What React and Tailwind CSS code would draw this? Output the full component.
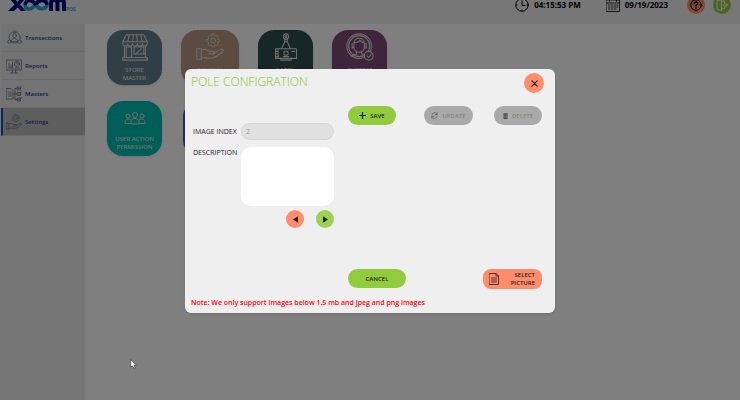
import React from "react";

function Svg({ className, children, box = "0 0 32 32", width = 1.3 }) {
  return (
    <svg viewBox={box} className={className} fill="none" stroke="currentColor" strokeWidth={width} strokeLinecap="round" strokeLinejoin="round" aria-hidden="true">
      {children}
    </svg>
  );
}

const GEAR = "M14.5 3h3l.6 2.6 1.8.8 2.3-1.4 2.1 2.1-1.4 2.3.8 1.8 2.6.6v3l-2.6.6-.8 1.8 1.4 2.3-2.1 2.1-2.3-1.4-1.8.8-.6 2.6h-3l-.6-2.6-1.8-.8-2.3 1.4-2.1-2.1 1.4-2.3-.8-1.8-2.6-.6v-3l2.6-.6.8-1.8L7.700 7.100l2.100-2.100 2.300 1.400 1.800-.8z";

function Logo() {
  return (
    <svg viewBox="0 0 58 16" className="h-4 w-[58px]" fill="none" aria-label="Xoom POS">
      <path d="M1 1h5l3.500 4L13 1h5l-6 6.500L18 14h-5l-3.500-3.500L6 14H0l6.500-6.500z" fill="#000a78" />
      <path d="M17 8c1 6 7 5 11-1s11-5 11 0-7 7-11 1" stroke="#2aa5cf" strokeWidth="3.600" />
      <path d="M28 8C24 2 18 2 17 8" stroke="#000a78" strokeWidth="3.600" />
      <path d="M28 7c3-5 10-5 11 1" stroke="#000a78" strokeWidth="3.600" />
      <path d="M43 14V6q0-3 3.200-3T49.500 6v8M49.500 6q0-3 3.200-3T56 6v8" stroke="#000a78" strokeWidth="4" />
    </svg>
  );
}

function TransactionsIcon() {
  return (
    <Svg className="size-[15px]" width={1.6}>
      <circle cx="16" cy="16" r="12" /><circle cx="16" cy="12" r="4" />
      <path d="M9 24c0-8 14-8 14 0z" />
      <circle cx="5" cy="25" r="3.500" fill="#e6e6e6" /><circle cx="27" cy="25" r="3.500" fill="#e6e6e6" /><circle cx="16" cy="4" r="2.500" fill="#e6e6e6" />
    </Svg>
  );
}

function ReportsIcon() {
  return (
    <Svg className="size-4" width={1.6}>
      <path d="M1 4h30v20H1zM13 24v5m6-5v5M9 30h14M5 20h9M6 19v-8m4 8v-5m3 5V9" />
      <circle cx="22" cy="12" r="5" /><path d="M22 7v5h5M18 20h9" />
    </Svg>
  );
}

function MastersIcon() {
  return (
    <Svg className="size-4" width={1.6}>
      <path d="M1 5h9l4 4v17H1zM4 12h6m-6 4h7m-7 4h7M14 16h8M18 5v22M18 5h4m-4 22h4" />
      <path d="M23 2h6v6h-6zM23 13h6v6h-6zM23 24h6v6h-6zM24 4l2 2 5-5M24 15l2 2 5-5M24 26l2 2 5-5" />
    </Svg>
  );
}

function HandGear({ className, width }) {
  return (
    <Svg className={className} width={width}>
      <g transform="translate(8 -1) scale(.72)"><path d={GEAR} /><circle cx="16" cy="13.500" r="4" /></g>
      <path d="M1 18h5v12H1zM6 20c4-3 7-1 9 1h5c2 0 2 3 0 3h-6M20 23l8-4c3-1 4 1 2 3l-9 6c-4 2-9 0-15 0" />
    </Svg>
  );
}

function StoreIcon() {
  return (
    <Svg className="size-7" width={1.2}>
      <path d="M6 2h20l4 8H2zM2 10v2a2.800 2.800 0 0 0 5.600 0 2.800 2.800 0 0 0 5.600 0 2.800 2.800 0 0 0 5.600 0 2.800 2.800 0 0 0 5.600 0 2.800 2.800 0 0 0 5.600 0v-2M7.600 10l2-8M13.200 10l1-8M18.800 10l-1-8M24.400 10l-2-8M4 15v13m24-13v13M2 28h28v3H2zM6 28V16h6v12M15 16h11v8H15zM14 24h13M18 23l5-5" />
    </Svg>
  );
}

function UsersIcon() {
  return (
    <Svg className="h-[14px] w-[22px]" box="0 0 44 26" width={2}>
      <circle cx="22" cy="7" r="5" /><circle cx="8" cy="9" r="4" /><circle cx="36" cy="9" r="4" />
      <path d="M14 24v-4c0-8 16-8 16 0v4zM14 24H2v-3c0-5 6-8 11-5M30 24h12v-3c0-5-6-8-11-5" />
    </Svg>
  );
}

function LabelIcon() {
  return (
    <Svg className="size-7" width={1.2}>
      <circle cx="16" cy="4" r="3" /><circle cx="16" cy="4" r="1" />
      <path d="M14.500 7v3L11 18m6.500-11v3l3.500 8M14.500 10h3M4 18h24v11H4zM7 18v11M10 29v2h12v-2M5 21h1m-1 3h1m-1 3h1" />
      <circle cx="16" cy="23" r="2.500" /><path d="M13 27h6M23 21h3" />
    </Svg>
  );
}

function SupportIcon() {
  return (
    <Svg className="size-7" width={1.2}>
      <circle cx="15" cy="15" r="14" /><circle cx="15" cy="15" r="12" />
      <path d="M9 12c0-8 12-8 12 0v4c0 8-12 8-12 0zM9 11c4 0 6-1 7-3 1 2 3 3 5 3M7 12v5h2m12-5h2v5h-2M12 21v3l-6 2m12-5v3l4 1" />
      <circle cx="26" cy="26" r="5" fill="#7d4a78" /><path d="M24 26l2 2 3-4" />
    </Svg>
  );
}

const NAV = [
  { label: "Transactions", icon: <TransactionsIcon /> },
  { label: "Reports", icon: <ReportsIcon /> },
  { label: "Masters", icon: <MastersIcon /> },
  { label: "Settings", icon: <HandGear className="size-4" width={1.6} />, active: true },
];

function Tile({ className, icon, lines }) {
  return (
    <button type="button" className={`flex h-[55px] flex-col items-center justify-between rounded-2xl pt-[3px] text-[6px] leading-[8px] font-semibold text-[#dddddd] shadow-sm ${className}`}>
      <span className="flex h-7 items-center">{icon}</span>
      <span className="text-center">{lines[0]}<br />{lines[1]}</span>
    </button>
  );
}

function Pill({ className, children, ...rest }) {
  return (
    <button type="button" className={`flex h-[19px] items-center justify-center gap-1 rounded-full text-[6px] leading-[8px] font-semibold ${className}`} {...rest}>
      {children}
    </button>
  );
}

function Dialog() {
  return (
    <section role="dialog" aria-labelledby="dialog-title" className="w-[370px] rounded-md bg-[#efefef] pt-1 pr-[13px] pb-[5px] pl-[6px] text-[#222222] shadow">
      <header className="flex h-[33px] items-start justify-between">
        <h1 id="dialog-title" className="text-[12px] leading-[17px] font-light text-[#84c425]">POLE CONFIGRATION</h1>
        <button type="button" aria-label="Close" className="-mr-[2px] flex size-5 items-center justify-center rounded-full bg-[#ff8c6b]">
          <Svg className="size-[7px]" box="0 0 8 8" width={1.5}><path d="M1 1l6 6M7 1L1 7" /></Svg>
        </button>
      </header>

      <div className="flex justify-between">
        <form className="flex w-[143px] flex-col gap-[7px] pt-[17px] text-[7px] leading-[10px]">
          <div className="flex items-center justify-between">
            <label htmlFor="image-index" className="pl-[2px]">IMAGE INDEX</label>
            <input id="image-index" disabled defaultValue="2" className="h-[17px] w-[93px] rounded-full border border-[#d6d6d6] bg-[#e0e0e0] px-1 text-[7px] text-[#999999]" />
          </div>
          <div className="flex items-start justify-between">
            <label htmlFor="description" className="pt-[1px] pl-[2px]">DESCRIPTION</label>
            <textarea id="description" className="h-[59px] w-[93px] resize-none rounded-[10px] bg-white p-1" />
          </div>
          <div className="-mt-[3px] flex justify-end gap-3">
            <button type="button" aria-label="Previous" className="flex size-[18px] items-center justify-center rounded-full bg-[#ff8c6b]">
              <svg viewBox="0 0 6 8" className="h-[7px] w-[5px]"><path d="M6 0v8L0 4z" fill="#222222" /></svg>
            </button>
            <button type="button" aria-label="Next" className="flex size-[18px] items-center justify-center rounded-full bg-[#9fd055]">
              <svg viewBox="0 0 6 8" className="h-[7px] w-[5px]"><path d="M0 0v8l6-4z" fill="#222222" /></svg>
            </button>
          </div>
        </form>

        <div className="flex h-[163px] w-[194px] justify-between">
          <Pill className="w-12 bg-[#92cb3e]">
            <Svg className="size-[7px]" box="0 0 8 8" width={1.4}><path d="M4 0v8M0 4h8" /></Svg>
            SAVE
          </Pill>
          <div className="flex gap-[21px]">
            <Pill disabled className="w-[49px] bg-[#a9a9a9] text-[#858585]">
              <Svg className="size-[7px] text-[#666666]" box="0 0 16 16" width={2}><path d="M2 7a6 6 0 0 1 11-3l1 2M14 9a6 6 0 0 1-11 3l-1-2M14 2v4h-4M2 14v-4h4" /></Svg>
              UPDATE
            </Pill>
            <Pill disabled className="w-12 bg-[#a9a9a9] text-[#858585]">
              <svg viewBox="0 0 10 12" className="h-[6px] w-[5px]" fill="#4b4b4b"><path d="M0 1h3V0h4v1h3v1.500H0zM1 3h8v9H1z" /><path d="M3.500 5v5M6.500 5v5" stroke="#a9a9a9" /></svg>
              DELETE
            </Pill>
          </div>
        </div>
      </div>

      <div className="flex justify-end">
        <div className="flex w-[194px] items-start justify-between">
          <Pill className="w-[58px] bg-[#92cb3e]">CANCEL</Pill>
          <button type="button" className="flex h-5 w-[59px] items-center justify-between rounded-lg bg-[#ff8c6b] pr-[7px] pl-[6px] text-right text-[6px] leading-[8px] font-semibold">
            <Svg className="h-3 w-[10px]" box="0 0 20 24" width={1.6}><path d="M1 1h13l5 5v17H1zM14 1v5h5M5 10h10M5 14h10M5 18h10" /></Svg>
            <span>SELECT<br />PICTURE</span>
          </button>
        </div>
      </div>
      <p className="mt-[9px] text-[7px] leading-[10px] font-semibold text-[#ff0010]">Note: We only support images below 1.5 mb and jpeg and png images</p>
    </section>
  );
}

export default function App() {
  return (
    <div className="relative h-screen overflow-hidden bg-white font-['Open_Sans','Noto_Sans',sans-serif]">
      <div className="flex h-full flex-col">
        <header className="-mt-[14px] flex h-[38px] shrink-0 items-center justify-between bg-[#eeeeee] pr-[9px] pl-2 text-[8px] leading-[10px] font-bold text-black">
          <div className="flex items-end">
            <Logo />
            <span className="pb-[1px] text-[5px] leading-[6px] text-[#2aa5cf]">POS</span>
          </div>
          <div className="flex items-center">
            <Svg className="mr-[5px] size-[14px]" box="0 0 28 28" width={2}><circle cx="14" cy="14" r="12.500" /><path d="M14 6v9h6M14 3v1M14 24v1M3 14h1M24 14h1" /></Svg>
            <time className="mr-[25px]">04:15:53 PM</time>
            <Svg className="mr-[5px] size-[14px]" box="0 0 28 28" width={1.6}><path d="M1 4h26v23H1zM1 10h26M7 1v6M21 1v6M5 14h3m3 0h3m3 0h3m2 0h2M5 18h3m3 0h3m3 0h3m2 0h2M5 22h3m3 0h3m3 0h3" /></Svg>
            <time className="mr-[19px]">09/19/2023</time>
            <button type="button" aria-label="Help" className="mr-2 flex size-[18px] items-center justify-center rounded-full bg-[#ff8c6b]">
              <Svg className="size-3" box="0 0 24 24" width={2}><circle cx="12" cy="12" r="10.500" /><path d="M8.500 9.500c0-5 7-5 7-.5 0 3-3.500 2.500-3.500 5M12 17.500v.5" strokeWidth="2.500" /></Svg>
            </button>
            <button type="button" aria-label="Log out" className="flex size-[18px] items-center justify-center rounded-full bg-[#92cb3e] text-white">
              <Svg className="size-3" box="0 0 24 24" width={1.8}><path d="M3 3l8-2v22l-8-2zM11 4h6v5M17 15v5h-6M14 12h9M19 8l4 4-4 4" /></Svg>
            </button>
          </div>
        </header>

        <div className="flex min-h-0 flex-1">
          <nav className="w-[85px] shrink-0 bg-[#ececec]">
            {NAV.map(({ label, icon, active }) => (
              <a key={label} href="#" className={`ml-[1px] flex h-7 items-center gap-[3px] border-b border-b-[#d4d4d4] border-l-2 pl-[3px] text-[6px] leading-[8px] font-semibold text-[#27408b] ${active ? "border-l-[#1450b4] bg-[#bcbcbc]" : "border-l-transparent bg-[#e6e6e6]"}`}>
                <span className="flex w-4 justify-center text-[#66718a]">{icon}</span>
                {label}
              </a>
            ))}
          </nav>
          <main className="grid auto-rows-min grid-cols-[55px_58px_55px_55px] justify-items-center gap-x-[19px] gap-y-4 pt-[6px] pl-[22px]">
            <Tile className="w-full bg-[#607d8b] pb-[3px]" icon={<StoreIcon />} lines={["STORE", "MASTER"]} />
            <Tile className="w-full bg-[#b99681] pb-[3px]" icon={<HandGear className="size-7" width={1.2} />} lines={["GENERAL", "SETTINGS"]} />
            <Tile className="w-full bg-[#2f4f4f] pb-[3px]" icon={<LabelIcon />} lines={["LABEL", "PRINTING"]} />
            <Tile className="w-full bg-[#7d4a78] pb-[3px]" icon={<SupportIcon />} lines={["CUSTOM", "SUPPORT"]} />
            <Tile className="w-full bg-[#00bdb2] pb-[5px]" icon={<UsersIcon />} lines={["USER ACTION", "PERMISSION"]} />
            <Tile className="w-[55px] bg-[#5054d8] pb-[5px]" icon={null} lines={["", ""]} />
          </main>
        </div>
      </div>

      <div className="absolute inset-0 flex items-start justify-center bg-black/50 pt-[69px]">
        <Dialog />
      </div>
      <svg viewBox="0 0 12 18" className="absolute top-[359px] left-[130px] h-[10px] w-[7px]" aria-hidden="true">
        <path d="M1 1v14l3-3 3 5 2-1-2-5h4z" fill="#ffffff" stroke="#333333" strokeWidth="1.200" />
      </svg>
    </div>
  );
}
